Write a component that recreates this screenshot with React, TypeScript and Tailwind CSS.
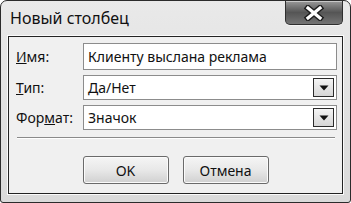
import React from 'react';

const font = { fontFamily: '"Noto Sans", "Open Sans", sans-serif' };

function CloseButton() {
  return (
    <div className="w-[58px] h-[24px] mr-[7px] rounded-b-[5px] border border-t-0 border-[#2e2e2e] bg-gradient-to-b from-[#9a9a9a] via-[#555555] to-[#747474] shadow-[inset_0_1px_0_#c8c8c8,0_1px_0_#f4f4f4] flex items-center justify-center">
      <svg width="22" height="16" viewBox="0 0 22 16">
        <path d="M5 3 L17 13 M17 3 L5 13" stroke="#1e1e1e" strokeWidth="6" strokeLinecap="square" />
        <path d="M5 3 L17 13 M17 3 L5 13" stroke="#ffffff" strokeWidth="3.2" strokeLinecap="square" />
      </svg>
    </div>
  );
}

function DropArrow() {
  return (
    <div className="w-[21px] h-[19px] mr-[2px] border border-[#2a2a2a] bg-gradient-to-b from-[#f4f4f4] to-[#d6d6d6] flex items-center justify-center">
      <svg width="10" height="6" viewBox="0 0 10 6">
        <path d="M0.5 0.5 L9.5 0.5 L5 5.5 Z" fill="#111" />
      </svg>
    </div>
  );
}

function Row({ label, children }: { label: React.ReactNode; children: React.ReactNode }) {
  return (
    <div className="flex items-center">
      <div className="w-[67px] text-[14px] text-[#111] leading-none">{label}</div>
      {children}
    </div>
  );
}

export default function App() {
  return (
    <div className="w-[351px] h-[203px] bg-white" style={font}>
      <div className="w-[351px] h-[203px] rounded-t-[7px] rounded-b-[3px] border border-[#2b2b2b] bg-gradient-to-b from-[#e9e9e9] to-[#dadada] flex flex-col">
        {/* title bar */}
        <div className="h-[35px] flex justify-between items-start shrink-0">
          <div className="pl-[9px] pt-[7px] text-[16px] text-[#111] leading-[20px]">Новый столбец</div>
          <CloseButton />
        </div>

        {/* client area */}
        <div className="flex-1 mx-[7px] mb-[8px] border border-[#232323] bg-[#f0f0f0] shadow-[0_0_0_1px_#fbfbfb] flex flex-col pl-[7px] pr-[5px] pt-[6px]">
          <div className="flex flex-col gap-[5px]">
            <Row label={<><span className="underline">И</span>мя:</>}>
              <div className="flex-1 h-[27px] border border-[#8c8c8c] bg-white flex items-center pl-[4px] text-[14px] text-[#111]">
                Клиенту выслана реклама
              </div>
            </Row>
            <Row label={<><span className="underline">Т</span>ип:</>}>
              <div className="flex-1 h-[25px] border border-[#8c8c8c] bg-white flex items-center justify-between pl-[4px] text-[14px] text-[#111]">
                <span>Да/Нет</span>
                <DropArrow />
              </div>
            </Row>
            <Row label={<>Фор<span className="underline">м</span>ат:</>}>
              <div className="flex-1 h-[25px] border border-[#8c8c8c] bg-white flex items-center justify-between pl-[4px] text-[14px] text-[#111]">
                <span>Значок</span>
                <DropArrow />
              </div>
            </Row>
          </div>

          <div className="mt-[7px] mr-[2px] ml-[1px] border-t border-[#8a8a8a] shadow-[0_1px_0_#ffffff]" />

          <div className="flex justify-center gap-[14px] mt-[18px] -ml-[2px]">
            <button className="w-[86px] h-[28px] rounded-[3px] border border-[#6a6a6a] bg-gradient-to-b from-[#f5f5f5] via-[#e8e8e8] to-[#d0d0d0] shadow-[inset_0_0_0_1px_#fbfbfb] text-[14px] text-[#111]">
              OK
            </button>
            <button className="w-[86px] h-[28px] rounded-[3px] border border-[#6a6a6a] bg-gradient-to-b from-[#f5f5f5] via-[#e8e8e8] to-[#d0d0d0] shadow-[inset_0_0_0_1px_#fbfbfb] text-[14px] text-[#111]">
              Отмена
            </button>
          </div>
        </div>
      </div>
    </div>
  );
}
